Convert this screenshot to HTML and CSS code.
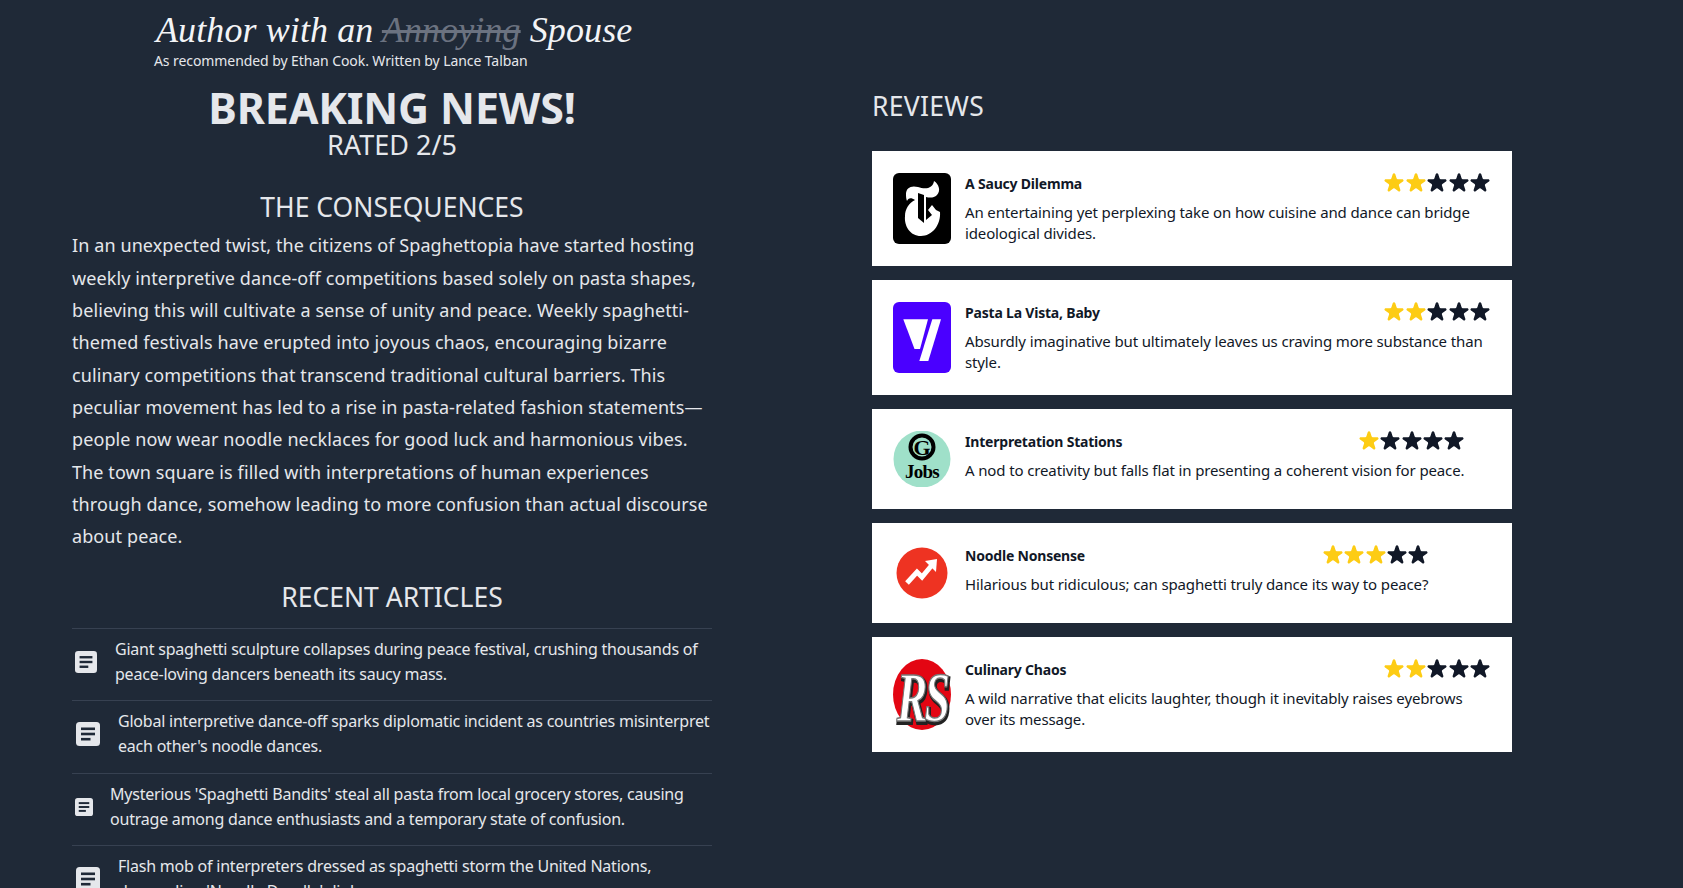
FILE: index.html
```html
<!DOCTYPE html>
<html lang="en">
<head>
    <meta charset="UTF-8">
    <meta name="viewport" content="width=device-width, initial-scale=1.0">
    <title>Author with an Annoying Spouse</title>
    <link rel="stylesheet" href="styles.css">
</head>
<body>
    <svg class="defs" width="0" height="0">
        <symbol id="star" viewBox="2.2 2.2 15.6 15">
            <path d="M9.049 2.927c.3-.921 1.603-.921 1.902 0l1.07 3.292a1 1 0 00.95.69h3.462c.969 0 1.371 1.24.588 1.81l-2.8 2.034a1 1 0 00-.364 1.118l1.07 3.292c.3.921-.755 1.688-1.54 1.118l-2.8-2.034a1 1 0 00-1.175 0l-2.8 2.034c-.784.57-1.838-.197-1.539-1.118l1.07-3.292a1 1 0 00-.364-1.118L2.98 8.72c-.783-.57-.38-1.81.588-1.81h3.461a1 1 0 00.951-.69l1.07-3.292z"/>
        </symbol>
        <symbol id="doc" viewBox="0 0 24 24">
            <rect width="24" height="24" rx="3.5" fill="#e5e7eb"/>
            <rect x="5" y="5.5" width="14" height="2.6" fill="#1f2937"/>
            <rect x="5" y="10.7" width="14" height="2.6" fill="#1f2937"/>
            <rect x="5" y="15.9" width="9.5" height="2.6" fill="#1f2937"/>
        </symbol>
    </svg>

    <header class="site-head">
        <div class="site-title">Author with an <s class="struck">Annoying</s> Spouse</div>
        <div class="site-sub">As recommended by Ethan Cook. Written by Lance Talban</div>
    </header>

    <main class="page">
        <section class="news">
            <h1 class="headline">BREAKING NEWS!</h1>
            <div class="rated">RATED 2/5</div>

            <h2 class="sec-title">THE CONSEQUENCES</h2>
            <p class="story">In an unexpected twist, the citizens of Spaghettopia have started hosting weekly interpretive dance-off competitions based solely on pasta shapes, believing this will cultivate a sense of unity and peace. Weekly spaghetti-themed festivals have erupted into joyous chaos, encouraging bizarre culinary competitions that transcend traditional cultural barriers. This peculiar movement has led to a rise in pasta-related fashion statements—people now wear noodle necklaces for good luck and harmonious vibes. The town square is filled with interpretations of human experiences through dance, somehow leading to more confusion than actual discourse about peace.</p>

            <h2 class="sec-title recent-title">RECENT ARTICLES</h2>
            <ul class="articles">
                <li class="article">
                    <svg class="doc doc-a"><use href="#doc"/></svg>
                    <span class="article-text">Giant spaghetti sculpture collapses during peace festival, crushing thousands of peace-loving dancers beneath its saucy mass.</span>
                </li>
                <li class="article">
                    <svg class="doc doc-b"><use href="#doc"/></svg>
                    <span class="article-text">Global interpretive dance-off sparks diplomatic incident as countries misinterpret each other's noodle dances.</span>
                </li>
                <li class="article">
                    <svg class="doc doc-c"><use href="#doc"/></svg>
                    <span class="article-text">Mysterious 'Spaghetti Bandits' steal all pasta from local grocery stores, causing outrage among dance enthusiasts and a temporary state of confusion.</span>
                </li>
                <li class="article">
                    <svg class="doc doc-b"><use href="#doc"/></svg>
                    <span class="article-text">Flash mob of interpreters dressed as spaghetti storm the United Nations, demanding 'Noodle Doodle' diplomacy.</span>
                </li>
            </ul>
        </section>

        <section class="reviews">
            <h2 class="reviews-title">REVIEWS</h2>

            <article class="card">
                <svg class="logo" viewBox="0 0 58 71">
                    <rect width="58" height="71" rx="6" fill="#000"/>
                    <path fill="#fff" d="M13 21C13 15 18 12 25 14C33 17 40 15 41 8C46 11 48 18 44 22C41 25 37 25 33 24L33 47L39 42L35 37L39 32L43 37L47 39C48 52 39 63 28 63C17 63 11 53 12 43C12 36 16 30 22 27C18 24 15 25 14 28C13 26 13 23 13 21Z"/>
                    <path fill="#000" d="M25 20L31 22L31 50L25 45Z"/>
                </svg>
                <div class="card-body">
                    <div class="card-top">
                        <h3 class="card-title">A Saucy Dilemma</h3>
                        <div class="stars">
                            <svg class="star on"><use href="#star"/></svg><svg class="star on"><use href="#star"/></svg><svg class="star"><use href="#star"/></svg><svg class="star"><use href="#star"/></svg><svg class="star"><use href="#star"/></svg>
                        </div>
                    </div>
                    <p class="card-text">An entertaining yet perplexing take on how cuisine and dance can bridge ideological divides.</p>
                </div>
            </article>

            <article class="card">
                <svg class="logo" viewBox="0 0 58 71">
                    <rect width="58" height="71" rx="6" fill="#4a00ff"/>
                    <polygon fill="#fff" points="10.3,17.3 35,17.3 27,47 21.5,47"/>
                    <polygon fill="#fff" points="39.3,17.3 48,17.3 35.3,59 26.3,59"/>
                </svg>
                <div class="card-body">
                    <div class="card-top">
                        <h3 class="card-title">Pasta La Vista, Baby</h3>
                        <div class="stars">
                            <svg class="star on"><use href="#star"/></svg><svg class="star on"><use href="#star"/></svg><svg class="star"><use href="#star"/></svg><svg class="star"><use href="#star"/></svg><svg class="star"><use href="#star"/></svg>
                        </div>
                    </div>
                    <p class="card-text">Absurdly imaginative but ultimately leaves us craving more substance than style.</p>
                </div>
            </article>

            <article class="card">
                <svg class="logo logo-round" viewBox="0 0 58 56">
                    <circle cx="29" cy="28" r="28.5" fill="#9fe0c9"/>
                    <circle cx="29" cy="16" r="11.5" fill="none" stroke="#000" stroke-width="4"/>
                    <text class="logo-g" x="29" y="23.5" text-anchor="middle">G</text>
                    <text class="logo-jobs" x="29" y="47" text-anchor="middle">Jobs</text>
                </svg>
                <div class="card-body card-body-fit">
                    <div class="card-top">
                        <h3 class="card-title">Interpretation Stations</h3>
                        <div class="stars">
                            <svg class="star on"><use href="#star"/></svg><svg class="star"><use href="#star"/></svg><svg class="star"><use href="#star"/></svg><svg class="star"><use href="#star"/></svg><svg class="star"><use href="#star"/></svg>
                        </div>
                    </div>
                    <p class="card-text">A nod to creativity but falls flat in presenting a coherent vision for peace.</p>
                </div>
            </article>

            <article class="card">
                <svg class="logo logo-round" viewBox="0 0 58 56">
                    <circle cx="29" cy="28" r="25.5" fill="#ee3322"/>
                    <path fill="none" stroke="#fff" stroke-width="5" d="M14 38L24 27L29 32L39 20"/>
                    <polygon fill="#fff" points="32,16 44,14 43,27"/>
                </svg>
                <div class="card-body card-body-fit">
                    <div class="card-top">
                        <h3 class="card-title">Noodle Nonsense</h3>
                        <div class="stars">
                            <svg class="star on"><use href="#star"/></svg><svg class="star on"><use href="#star"/></svg><svg class="star on"><use href="#star"/></svg><svg class="star"><use href="#star"/></svg><svg class="star"><use href="#star"/></svg>
                        </div>
                    </div>
                    <p class="card-text">Hilarious but ridiculous; can spaghetti truly dance its way to peace?</p>
                </div>
            </article>

            <article class="card">
                <svg class="logo" viewBox="0 0 58 71">
                    <ellipse cx="29" cy="35.5" rx="29" ry="35.5" fill="#e30613"/>
                    <text class="logo-rs logo-rs-back" transform="translate(30 64) scale(1 1.5)" text-anchor="middle">RS</text>
                    <text class="logo-rs logo-rs-front" transform="translate(29 62) scale(1 1.5)" text-anchor="middle">RS</text>
                </svg>
                <div class="card-body">
                    <div class="card-top">
                        <h3 class="card-title">Culinary Chaos</h3>
                        <div class="stars">
                            <svg class="star on"><use href="#star"/></svg><svg class="star on"><use href="#star"/></svg><svg class="star"><use href="#star"/></svg><svg class="star"><use href="#star"/></svg><svg class="star"><use href="#star"/></svg>
                        </div>
                    </div>
                    <p class="card-text">A wild narrative that elicits laughter, though it inevitably raises eyebrows over its message.</p>
                </div>
            </article>
        </section>
    </main>
</body>
</html>
```

FILE: styles.css
```css
/* reset */
*{
    padding: 0;
    margin: 0;
    box-sizing: border-box;
}

html, body{
    height: 100vh;
    overflow: hidden;
}

body{
    background-color: #1f2937;
    color: #e5e7eb;
    font-family: "Noto Sans", sans-serif;
}

.defs{
    position: absolute;
}

/* header */
.site-head{
    padding: 8px 0 0 154px;
    height: 74px;
}

.site-title{
    font-family: "Liberation Serif", serif;
    font-style: italic;
    font-size: 36px;
    line-height: 44px;
    letter-spacing: 0.1px;
    padding-left: 2px;
    color: #f3f4f6;
}

.struck{
    color: #6b7280;
}

.site-sub{
    font-size: 14px;
    line-height: 18px;
    letter-spacing: -0.08px;
}

/* columns */
.page{
    display: flex;
    gap: 160px;
    padding-left: 72px;
}

.news{
    width: 640px;
    padding-top: 10.7px;
}

.reviews{
    width: 640px;
    padding-top: 15.5px;
}

/* left column */
.headline{
    font-size: 43px;
    line-height: 45.6px;
    font-weight: 700;
    text-align: center;
    letter-spacing: -0.15px;
}

.rated{
    font-size: 27px;
    line-height: 30px;
    text-align: center;
}

.sec-title{
    font-size: 26.5px;
    line-height: 32px;
    font-weight: 400;
    text-align: center;
    margin-top: 30.5px;
}

.story{
    font-size: 18px;
    line-height: 32.3px;
    margin-top: 6.7px;
    letter-spacing: 0.1px;
}

.recent-title{
    margin-top: 28.9px;
}

.articles{
    list-style: none;
    margin-top: 14.5px;
}

.article{
    display: flex;
    align-items: center;
    border-top: 1px solid #374151;
    padding: 8px 0 13.5px 3px;
}

.doc{
    flex-shrink: 0;
}

.doc-a{
    width: 22px;
    height: 22px;
    margin-right: 18px;
}

.doc-b{
    width: 24px;
    height: 24px;
    margin: 0 18px 0 1px;
}

.doc-c{
    width: 18px;
    height: 18px;
    margin-right: 17px;
}

.article-text{
    font-size: 16px;
    line-height: 25px;
    letter-spacing: -0.22px;
}

/* reviews */
.reviews-title{
    font-size: 26.5px;
    line-height: 32px;
    font-weight: 400;
    letter-spacing: 0.3px;
    margin-bottom: 29px;
}

.card{
    display: flex;
    gap: 14px;
    background-color: #fff;
    color: #111827;
    padding: 22px 22px 22px 21px;
    margin-bottom: 14px;
}

.logo{
    width: 58px;
    height: 71px;
    flex-shrink: 0;
}

.logo-round{
    height: 56px;
}

.logo-g{
    font-family: "Liberation Serif", serif;
    font-weight: 700;
    font-size: 22px;
}

.logo-jobs{
    font-family: "Liberation Serif", serif;
    font-weight: 700;
    font-size: 19px;
    letter-spacing: -0.8px;
}

.logo-rs{
    font-family: "Liberation Serif", serif;
    font-weight: 700;
    font-style: italic;
    font-size: 46px;
    letter-spacing: -3px;
}

.logo-rs-back{
    fill: #222;
    stroke: #222;
    stroke-width: 2.5px;
}

.logo-rs-front{
    fill: #fff;
    stroke: #777;
    stroke-width: 1px;
}

.card-body{
    flex: 1;
}

.card-body-fit{
    flex: none;
    width: max-content;
}

.card-top{
    display: flex;
    justify-content: space-between;
    align-items: center;
    height: 21px;
    margin-bottom: 8px;
}

.card-title{
    font-size: 14px;
    line-height: 21px;
    font-weight: 700;
    letter-spacing: -0.2px;
}

.stars{
    display: flex;
    gap: 1.4px;
}

.star{
    width: 20px;
    height: 19.5px;
    fill: #111827;
}

.star.on{
    fill: #fdcc14;
}

.card-text{
    font-size: 15px;
    line-height: 21px;
    letter-spacing: -0.13px;
}
```
